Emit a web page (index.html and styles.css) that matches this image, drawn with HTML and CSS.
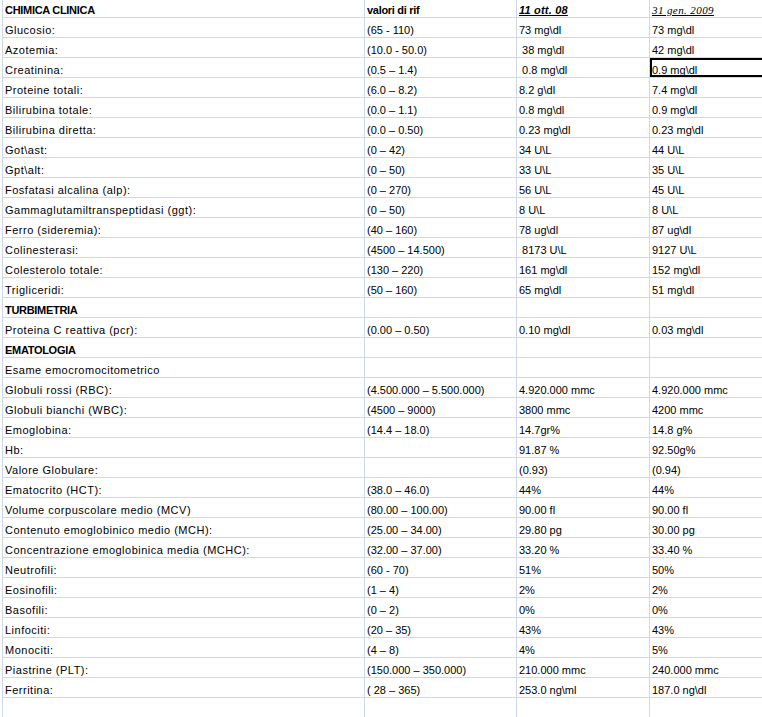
FILE: index.html
```html
<!DOCTYPE html>
<html>
<head>
<meta charset="utf-8">
<link rel="stylesheet" href="styles.css">
</head>
<body>
<table class="sheet">
<colgroup><col class="c1"><col class="c2"><col class="c3"><col class="c4"></colgroup>
<tr class="first"><td class="lbl b">CHIMICA CLINICA</td><td class="b">valori di rif</td><td class="d1">11 ott. 08</td><td class="d2">31 gen. 2009</td></tr>
<tr><td class="lbl">Glucosio:</td><td>(65 - 110)</td><td>73 mg\dl</td><td>73 mg\dl</td></tr>
<tr><td class="lbl">Azotemia:</td><td>(10.0 - 50.0)</td><td> 38 mg\dl</td><td>42 mg\dl</td></tr>
<tr><td class="lbl">Creatinina:</td><td>(0.5 – 1.4)</td><td> 0.8 mg\dl</td><td class="sel">0.9 mg\dl</td></tr>
<tr><td class="lbl">Proteine totali:</td><td>(6.0 – 8.2)</td><td>8.2 g\dl</td><td>7.4 mg\dl</td></tr>
<tr><td class="lbl">Bilirubina totale:</td><td>(0.0 – 1.1)</td><td>0.8 mg\dl</td><td>0.9 mg\dl</td></tr>
<tr><td class="lbl">Bilirubina diretta:</td><td>(0.0 – 0.50)</td><td>0.23 mg\dl</td><td>0.23 mg\dl</td></tr>
<tr><td class="lbl">Got\ast:</td><td>(0 – 42)</td><td>34 U\L</td><td>44 U\L</td></tr>
<tr><td class="lbl">Gpt\alt:</td><td>(0 – 50)</td><td>33 U\L</td><td>35 U\L</td></tr>
<tr><td class="lbl">Fosfatasi alcalina (alp):</td><td>(0 – 270)</td><td>56 U\L</td><td>45 U\L</td></tr>
<tr><td class="lbl">Gammaglutamiltranspeptidasi (ggt):</td><td>(0 – 50)</td><td>8 U\L</td><td>8 U\L</td></tr>
<tr><td class="lbl">Ferro (sideremia):</td><td>(40 – 160)</td><td>78 ug\dl</td><td>87 ug\dl</td></tr>
<tr><td class="lbl">Colinesterasi:</td><td>(4500 – 14.500)</td><td> 8173 U\L</td><td>9127 U\L</td></tr>
<tr><td class="lbl">Colesterolo totale:</td><td>(130 – 220)</td><td>161 mg\dl</td><td>152 mg\dl</td></tr>
<tr><td class="lbl">Trigliceridi:</td><td>(50 – 160)</td><td>65 mg\dl</td><td>51 mg\dl</td></tr>
<tr><td class="lbl b">TURBIMETRIA</td><td></td><td></td><td></td></tr>
<tr><td class="lbl">Proteina C reattiva (pcr):</td><td>(0.00 – 0.50)</td><td>0.10 mg\dl</td><td>0.03 mg\dl</td></tr>
<tr><td class="lbl b">EMATOLOGIA</td><td></td><td></td><td></td></tr>
<tr><td class="lbl">Esame emocromocitometrico</td><td></td><td></td><td></td></tr>
<tr><td class="lbl">Globuli rossi (RBC):</td><td>(4.500.000 – 5.500.000)</td><td>4.920.000 mmc</td><td>4.920.000 mmc</td></tr>
<tr><td class="lbl">Globuli bianchi (WBC):</td><td>(4500 – 9000)</td><td>3800 mmc</td><td>4200 mmc</td></tr>
<tr><td class="lbl">Emoglobina:</td><td>(14.4 – 18.0)</td><td>14.7gr%</td><td>14.8 g%</td></tr>
<tr><td class="lbl">Hb:</td><td></td><td>91.87 %</td><td>92.50g%</td></tr>
<tr><td class="lbl">Valore Globulare:</td><td></td><td>(0.93)</td><td>(0.94)</td></tr>
<tr><td class="lbl">Ematocrito (HCT):</td><td>(38.0 – 46.0)</td><td>44%</td><td>44%</td></tr>
<tr><td class="lbl">Volume corpuscolare medio (MCV)</td><td>(80.00 – 100.00)</td><td>90.00 fl</td><td>90.00 fl</td></tr>
<tr><td class="lbl">Contenuto emoglobinico medio (MCH):</td><td>(25.00 – 34.00)</td><td>29.80 pg</td><td>30.00 pg</td></tr>
<tr><td class="lbl">Concentrazione emoglobinica media (MCHC):</td><td>(32.00 – 37.00)</td><td>33.20 %</td><td>33.40 %</td></tr>
<tr><td class="lbl">Neutrofili:</td><td>(60 - 70)</td><td>51%</td><td>50%</td></tr>
<tr><td class="lbl">Eosinofili:</td><td>(1 – 4)</td><td>2%</td><td>2%</td></tr>
<tr><td class="lbl">Basofili:</td><td>(0 – 2)</td><td>0%</td><td>0%</td></tr>
<tr><td class="lbl">Linfociti:</td><td>(20 – 35)</td><td>43%</td><td>43%</td></tr>
<tr><td class="lbl">Monociti:</td><td>(4 – 8)</td><td>4%</td><td>5%</td></tr>
<tr><td class="lbl">Piastrine (PLT):</td><td>(150.000 – 350.000)</td><td>210.000 mmc</td><td>240.000 mmc</td></tr>
<tr><td class="lbl">Ferritina:</td><td>( 28 – 365)</td><td>253.0 ng\ml</td><td>187.0 ng\dl</td></tr>
<tr><td class="lbl"></td><td></td><td></td><td></td></tr>
</table>
</body>
</html>
```
FILE: styles.css
```css
html, body {
  margin: 0;
  padding: 0;
  background: #fff;
  overflow: hidden;
}
body {
  font-family: "Liberation Sans", Arial, sans-serif;
  font-size: 11px;
  color: #000;
}
.sheet {
  margin-left: 2px;
  border-collapse: separate;
  border-spacing: 0;
  table-layout: fixed;
  width: 798px;
}
.c1 { width: 363px; }
.c2 { width: 152px; }
.c3 { width: 133px; }
.c4 { width: 150px; }
.sheet tr { height: 20px; }
.sheet tr.first { height: 18px; }
.sheet td {
  border-right: 1px solid #d0d7e5;
  border-bottom: 1px solid #d0d7e5;
  padding: 0 2px;
  line-height: 13px;
  vertical-align: bottom;
  white-space: pre;
  overflow: hidden;
  box-sizing: border-box;
}
.sheet td.lbl {
  border-left: 1px solid #d0d7e5;
  letter-spacing: 0.5px;
}
.sheet td.b {
  font-weight: bold;
  letter-spacing: -0.3px;
}
.sheet td.d1 {
  font-weight: bold;
  font-style: italic;
  text-decoration: underline;
  letter-spacing: 0.2px;
}
.sheet td.d2 {
  font-family: "Liberation Serif", "Times New Roman", serif;
  font-style: italic;
  text-decoration: underline;
  letter-spacing: 0.4px;
  color: #000;
}
.sheet td.sel {
  box-shadow: inset 0 0 0 2px #000;
}
```
